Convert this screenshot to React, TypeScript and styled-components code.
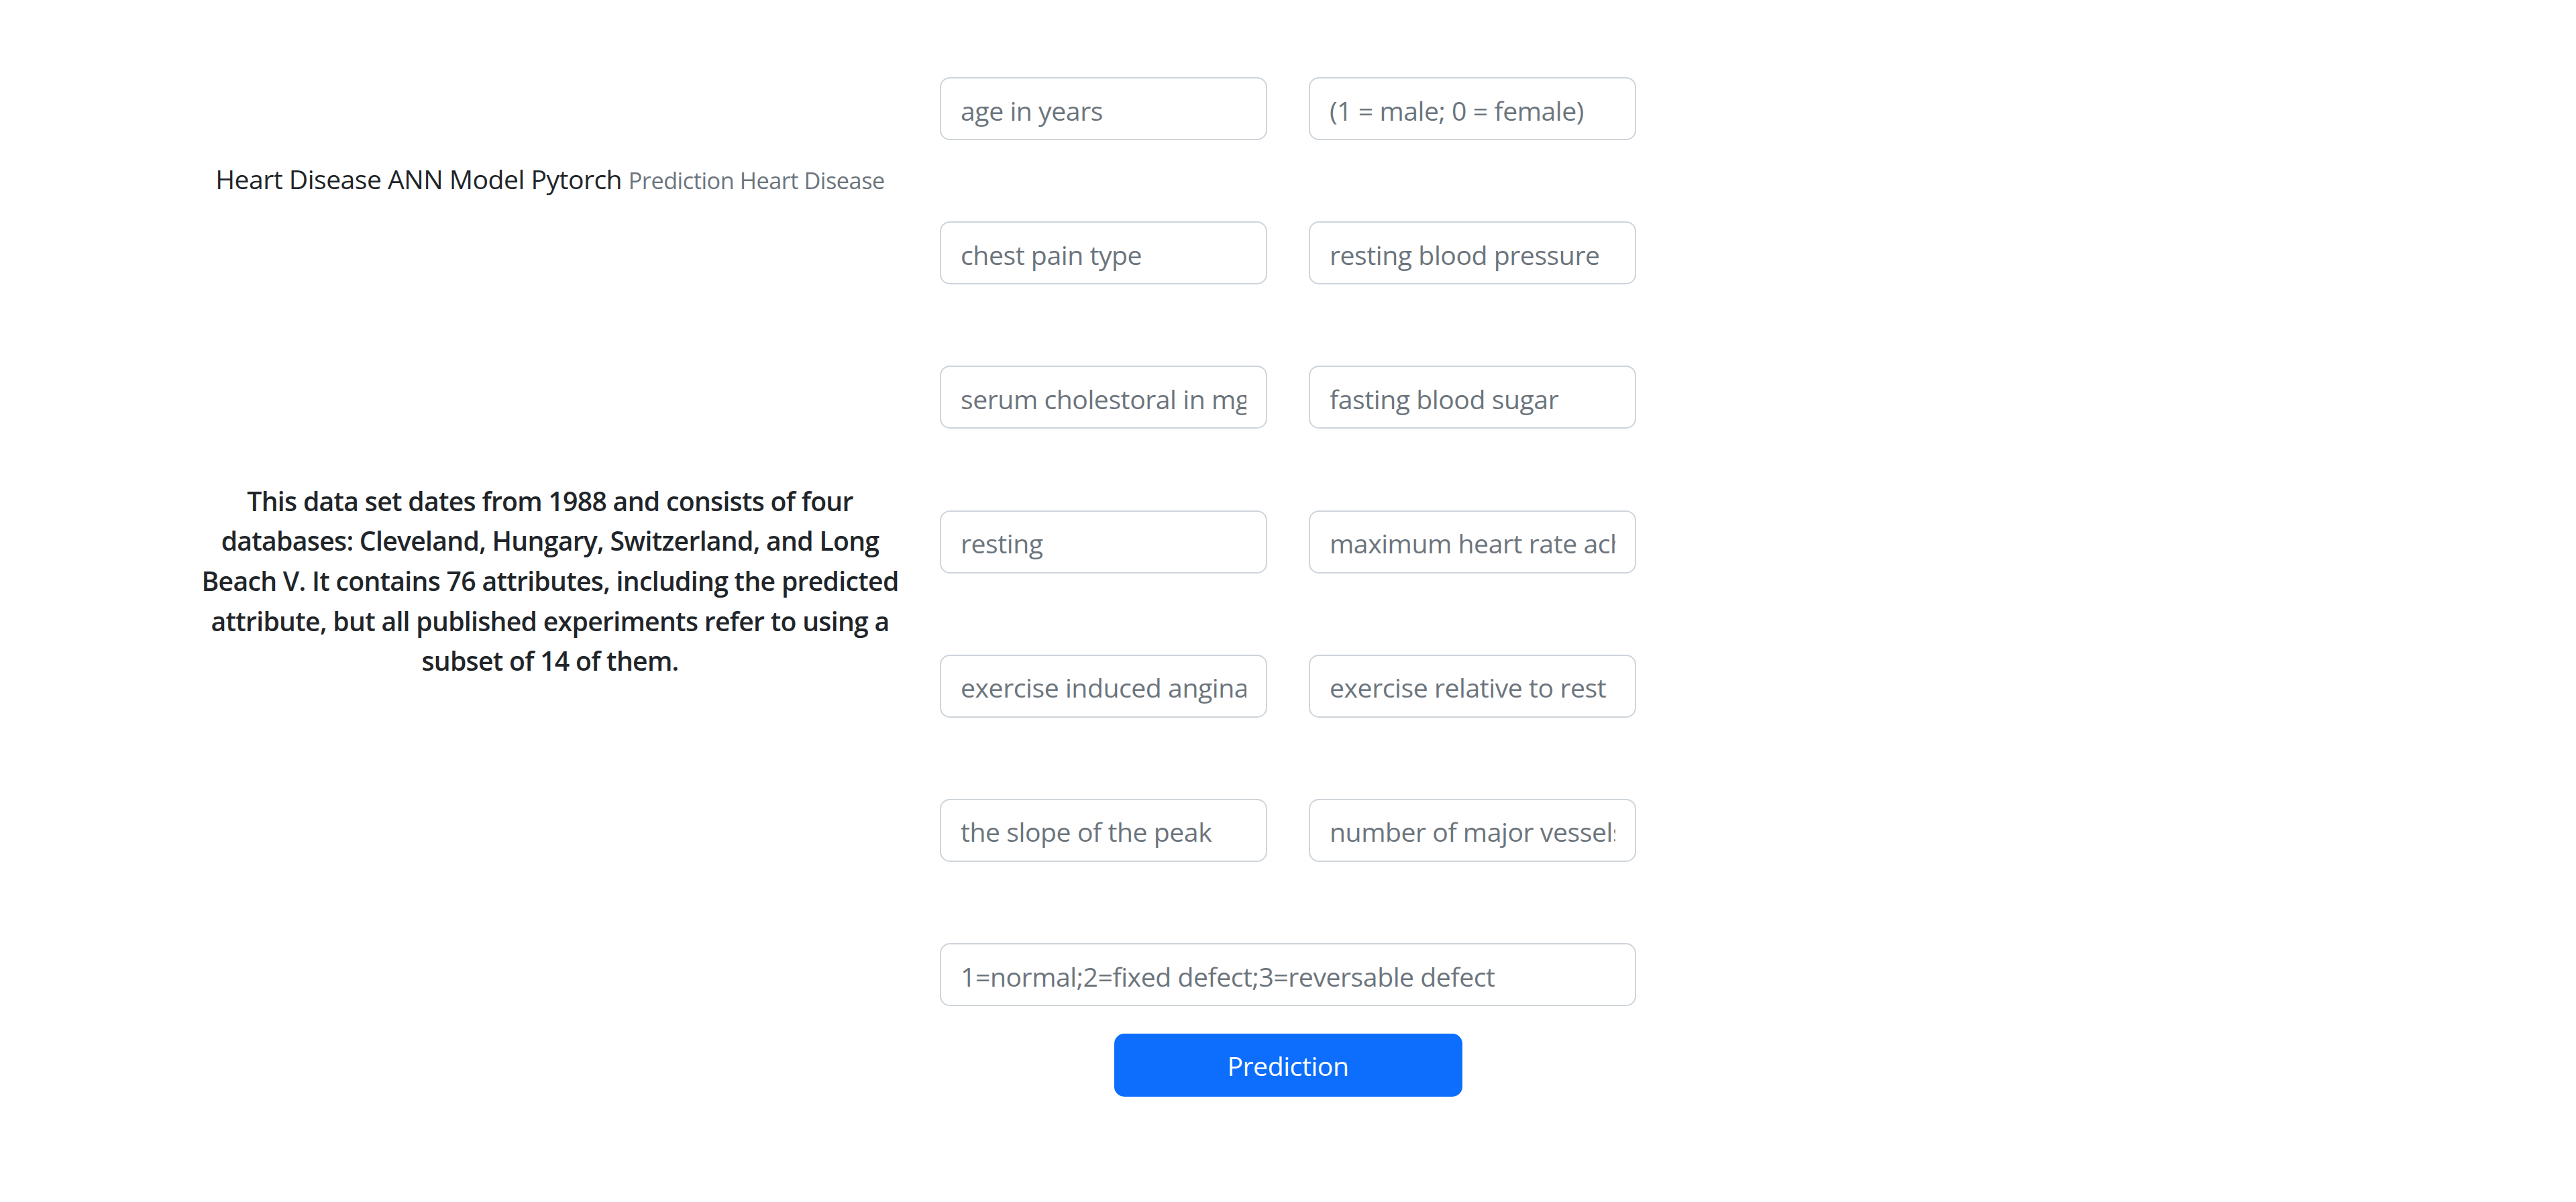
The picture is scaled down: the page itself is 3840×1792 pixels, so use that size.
import React from "react";
import styled, { createGlobalStyle } from "styled-components";

const GlobalStyle = createGlobalStyle`
  html, body {
    margin: 0;
    padding: 0;
    background: #ffffff;
  }
  body {
    font-family: "Open Sans", "Noto Sans", "Liberation Sans", sans-serif;
    color: #212529;
  }
  * { box-sizing: border-box; }
`;

const Page = styled.div`
  display: flex;
  align-items: flex-start;
  gap: 62px;
  padding: 0 0 0 301px;
  min-height: 1792px;
`;

const InfoColumn = styled.section`
  width: 1038px;
  display: flex;
  flex-direction: column;
  align-items: center;
  text-align: center;
`;

const Title = styled.h1`
  margin: 238px 0 0;
  font-size: 39.2px;
  line-height: 58.8px;
  font-weight: 400;
  letter-spacing: -0.55px;
  color: #212529;
  white-space: nowrap;
`;

const Muted = styled.small`
  font-size: 34.3px;
  letter-spacing: -0.5px;
  color: #6c757d;
`;

const Description = styled.p`
  margin: 418px 0 0;
  font-size: 39.2px;
  line-height: 59.6px;
  font-weight: 600;
  letter-spacing: -0.72px;
  color: #212529;
  white-space: nowrap;
`;

const FormColumn = styled.form`
  width: 1038px;
  margin-top: 115px;
  display: flex;
  flex-direction: column;
  align-items: center;
`;

const FieldGrid = styled.div`
  width: 100%;
  display: grid;
  grid-template-columns: 1fr 1fr;
  column-gap: 62px;
  row-gap: 121.2px;
`;

const Field = styled.input<{ $wide?: boolean }>`
  grid-column: ${(p) => (p.$wide ? "1 / span 2" : "auto")};
  width: 100%;
  min-width: 0;
  height: 94px;
  padding: 4px 29px 0;
  border: 2px solid #ced4da;
  border-radius: 15px;
  background: #ffffff;
  font-family: inherit;
  font-size: 39.2px;
  letter-spacing: -0.46px;
  color: #212529;
  outline: none;
  &::placeholder {
    color: #6c757d;
    opacity: 1;
  }
`;

const SubmitButton = styled.button`
  margin-top: 41px;
  width: 519px;
  height: 94px;
  border: none;
  border-radius: 15px;
  background: #0d6efd;
  color: #ffffff;
  font-family: inherit;
  font-size: 39.2px;
  letter-spacing: -0.46px;
  cursor: pointer;
`;

const fields: { name: string; placeholder: string; wide?: boolean }[] = [
  { name: "age", placeholder: "age in years" },
  { name: "sex", placeholder: "(1 = male; 0 = female)" },
  { name: "cp", placeholder: "chest pain type" },
  { name: "trestbps", placeholder: "resting blood pressure" },
  { name: "chol", placeholder: "serum cholestoral in mg/dl" },
  { name: "fbs", placeholder: "fasting blood sugar" },
  { name: "restecg", placeholder: "resting" },
  { name: "thalach", placeholder: "maximum heart rate achieved" },
  { name: "exang", placeholder: "exercise induced angina" },
  { name: "oldpeak", placeholder: "exercise relative to rest" },
  { name: "slope", placeholder: "the slope of the peak" },
  { name: "ca", placeholder: "number of major vessels (0-3)" },
  { name: "thal", placeholder: "1=normal;2=fixed defect;3=reversable defect", wide: true },
];

export default function App() {
  return (
    <>
      <GlobalStyle />
      <Page>
        <InfoColumn>
          <Title>
            Heart Disease ANN Model Pytorch <Muted>Prediction Heart Disease</Muted>
          </Title>
          <Description>
            This data set dates from 1988 and consists of four
            <br />
            databases: Cleveland, Hungary, Switzerland, and Long
            <br />
            Beach V. It contains 76 attributes, including the predicted
            <br />
            attribute, but all published experiments refer to using a
            <br />
            subset of 14 of them.
          </Description>
        </InfoColumn>
        <FormColumn onSubmit={(e) => e.preventDefault()}>
          <FieldGrid>
            {fields.map((f) => (
              <Field key={f.name} name={f.name} type="text" placeholder={f.placeholder} $wide={f.wide} />
            ))}
          </FieldGrid>
          <SubmitButton type="submit">Prediction</SubmitButton>
        </FormColumn>
      </Page>
    </>
  );
}
